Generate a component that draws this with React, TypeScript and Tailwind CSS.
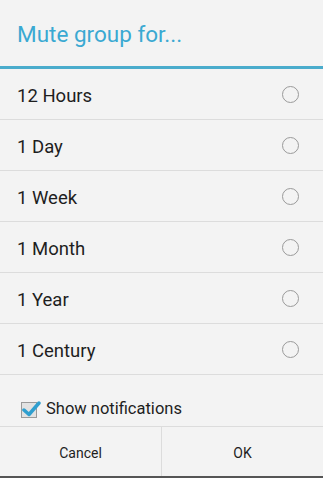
import React from "react";

const options = ["12 Hours", "1 Day", "1 Week", "1 Month", "1 Year", "1 Century"];

function Radio() {
  return <span className="w-[17px] h-[17px] rounded-full border-[1.5px] border-[#9a9a9a] shrink-0" />;
}

export default function App() {
  return (
    <div
      className="w-[323px] h-[478px] bg-[#f3f3f3] flex flex-col overflow-hidden"
      style={{ fontFamily: "Roboto, 'Liberation Sans', sans-serif" }}
    >
      <div className="h-[66px] flex items-center pl-[17px] pt-[4px] shrink-0">
        <span className="text-[22.5px] text-[#3aa9d2]">Mute group for...</span>
      </div>
      <div className="h-[3px] bg-[#4aaccc] shrink-0" />
      <div className="flex flex-col">
        {options.map((o) => (
          <div
            key={o}
            className="h-[51px] flex items-center justify-between pl-[17px] pr-[24px] border-b border-[#dcdcdc] shrink-0"
          >
            <span className="text-[18.5px] leading-none text-[#1e1e1e] pt-[4px]">{o}</span>
            <Radio />
          </div>
        ))}
      </div>
      <div className="h-[52px] flex items-center pl-[21px] pt-[18px] border-b border-[#dcdcdc] shrink-0">
        <span className="w-[16px] h-[16px] border border-[#9a9a9a] bg-[#e2e2e2] relative shrink-0">
          <svg viewBox="0 0 20 20" className="absolute -left-[1px] -top-[4px] w-[20px] h-[20px]">
            <path d="M3 11 L8 15.5 L18 4" fill="none" stroke="#2f9fcf" strokeWidth="3.5" strokeLinecap="round" strokeLinejoin="round" />
          </svg>
        </span>
        <span className="ml-[9px] text-[16.5px] text-[#1e1e1e]">Show notifications</span>
      </div>
      <div className="flex flex-1">
        <button className="flex-1 flex items-center justify-center pt-[3px] text-[14px] text-[#1e1e1e] border-r border-[#dcdcdc]">
          Cancel
        </button>
        <button className="flex-1 flex items-center justify-center pt-[3px] text-[14px] text-[#1e1e1e]">OK</button>
      </div>
      <div className="h-[2px] bg-[#555] shrink-0" />
    </div>
  );
}
